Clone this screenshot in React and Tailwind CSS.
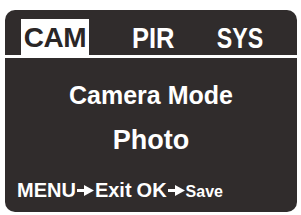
import React from 'react';

const Arrow = () => (
    <svg width="17" height="11" viewBox="0 0 17 11" className="mx-[1px] shrink-0">
        <rect x="0" y="4" width="9" height="3" fill="#fff" />
        <polygon points="7,0 17,5.5 7,11" fill="#fff" />
    </svg>
);

const App = () => {
    return (
        <div className="w-[301px] h-[215px] bg-white pt-[10px] pl-[5px]" style={{ fontFamily: '"Liberation Sans", Arial, sans-serif' }}>
            <div className="w-[292px] h-[202px] rounded-[10px] bg-[#302c2c] overflow-hidden flex flex-col font-bold">
                {/* Tabs */}
                <div className="h-[45px] flex flex-row items-end shrink-0">
                    <div className="ml-[16px] w-[68px] h-[36px] bg-white flex items-center justify-center pt-[2px]">
                        <span className="text-[28px] leading-none text-[#2a2626] tracking-[-0.5px]">CAM</span>
                    </div>
                    <div className="h-[36px] flex items-center pt-[2px] ml-[43px] w-[43px] justify-center">
                        <span className="text-[29px] leading-none text-white inline-block scale-x-[0.88]">PIR</span>
                    </div>
                    <div className="h-[36px] flex items-center pt-[2px] ml-[42px] w-[46px] justify-center">
                        <span className="text-[29px] leading-none text-white inline-block scale-x-[0.8]">SYS</span>
                    </div>
                </div>
                <div className="h-[3px] bg-white shrink-0" />

                {/* Body */}
                <div className="flex-1 flex flex-col items-center text-white">
                    <p className="mt-[25px] text-[25px] leading-none">Camera Mode</p>
                    <p className="mt-[19px] text-[27px] leading-none">Photo</p>
                    <div className="self-start ml-[12px] mt-[26px] flex flex-row items-center leading-none">
                        <span className="text-[20px]">MENU</span>
                        <Arrow />
                        <span className="text-[20px]">Exit</span>
                        <span className="text-[20px] ml-[5px]">OK</span>
                        <Arrow />
                        <span className="text-[16px] mt-[3px]">Save</span>
                    </div>
                </div>
            </div>
        </div>
    );
};

export default App;
